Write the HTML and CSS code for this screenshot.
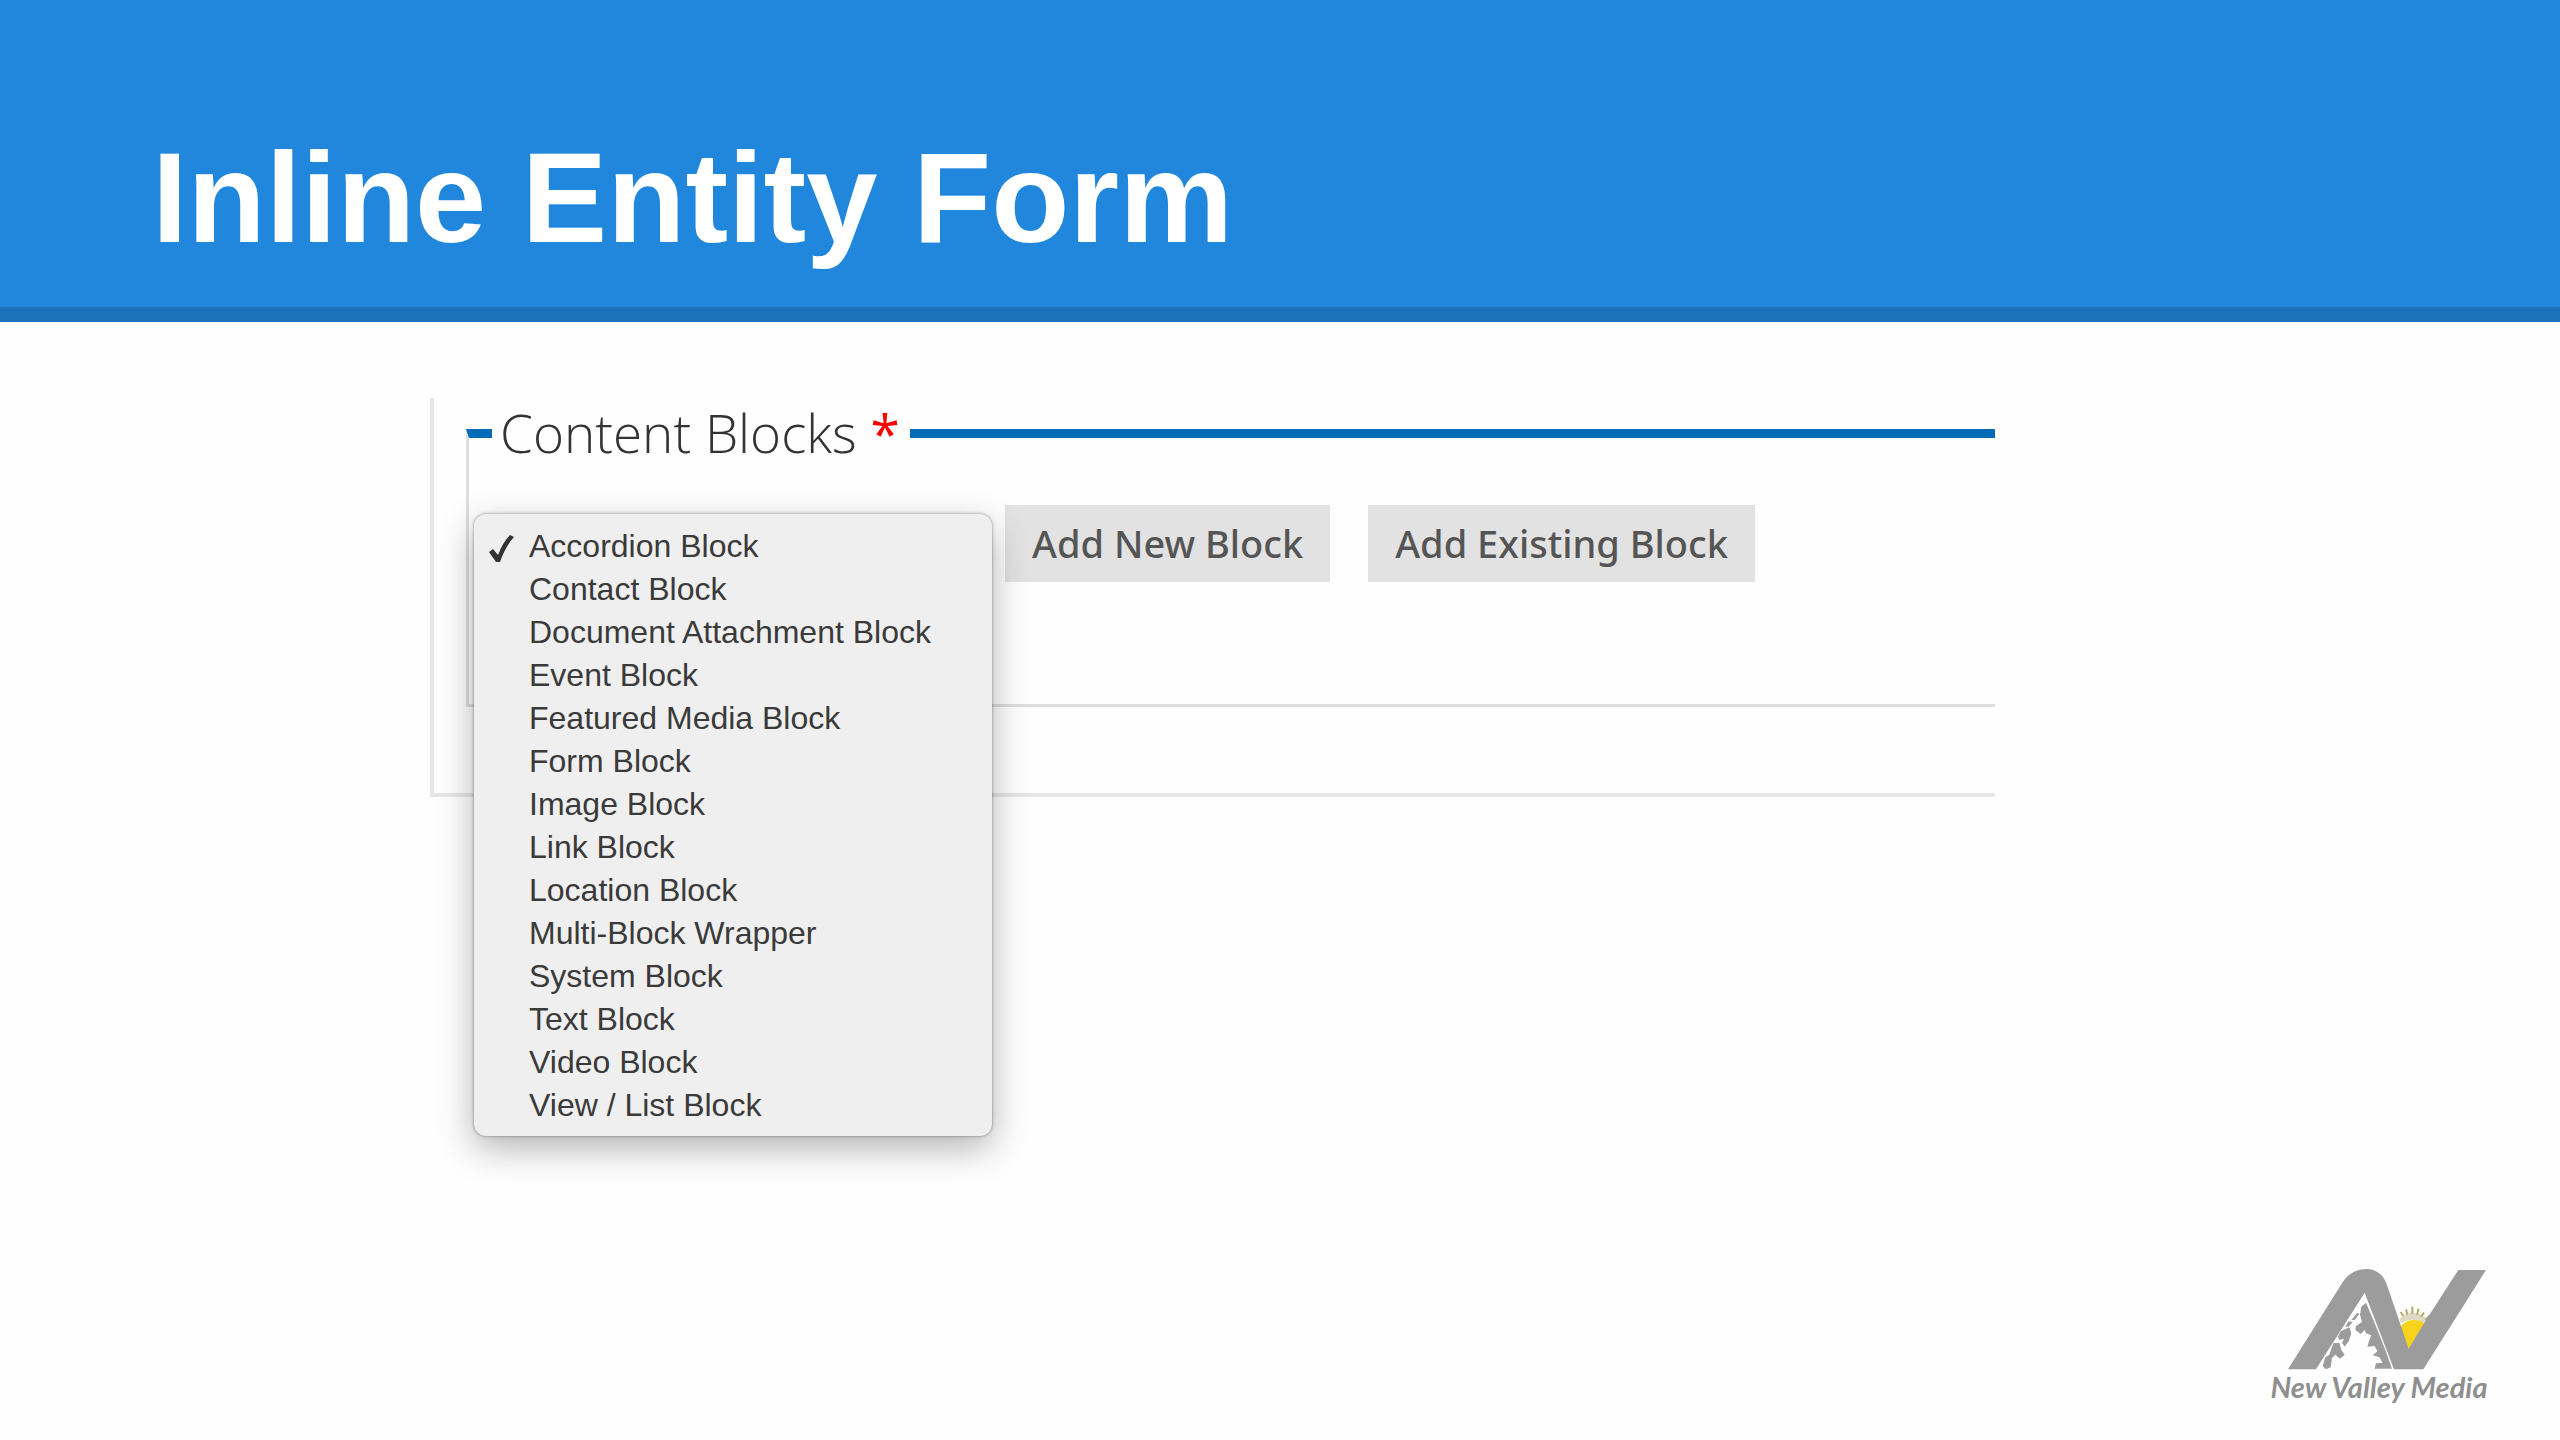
FILE: index.html
```html
<!DOCTYPE html>
<html lang="en">

<head>
    <meta charset="UTF-8">
    <meta name="viewport" content="width=device-width, initial-scale=1.0">
    <title>Inline Entity Form</title>
    <link rel="stylesheet" href="styles.css">
</head>

<body>
    <header class="slide-header">
        <h1>Inline Entity Form</h1>
    </header>

    <main class="slide-body">
        <form class="entity-form">
            <fieldset class="content-blocks">
                <legend>Content Blocks <span class="required">*</span></legend>
                <div class="actions">
                    <div class="type-picker">
                        <div class="menu">
                            <svg class="check" viewBox="0 0 26 30" aria-hidden="true">
                                <path d="M1 18 L5 15 L10 21 Q15 8 22 1 L26 3 Q17 13 12 28 L8 28 Z" />
                            </svg>
                            <select size="14" aria-label="Block type">
                                <option selected>Accordion Block</option>
                                <option>Contact Block</option>
                                <option>Document Attachment Block</option>
                                <option>Event Block</option>
                                <option>Featured Media Block</option>
                                <option>Form Block</option>
                                <option>Image Block</option>
                                <option>Link Block</option>
                                <option>Location Block</option>
                                <option>Multi-Block Wrapper</option>
                                <option>System Block</option>
                                <option>Text Block</option>
                                <option>Video Block</option>
                                <option>View / List Block</option>
                            </select>
                        </div>
                    </div>
                    <button type="button">Add New Block</button>
                    <button type="button">Add Existing Block</button>
                </div>
            </fieldset>
        </form>
    </main>

    <footer class="slide-footer">
        <div class="logo">
            <svg viewBox="90 84 654 306" aria-hidden="true">
                <!-- sun -->
                <path class="rays" d="M478 236 Q515 200 562 236 L552 250 Q515 228 482 250 Z" />
                <path class="ray-lines" d="M490 228 L482 216 M502 224 L498 208 M517 222 L517 200 M531 224 L536 206 M543 230 L552 218 M556 240 L570 226" />
                <path class="sun" d="M480 264 Q494 240 518 240 Q542 240 554 252 L506 328 Z" />
                <!-- A and V -->
                <path class="letters" d="M144 388 L306 130 Q332 87 378 87 Q422 87 439 130 L480 250 L506 326 L552 250 L655 90 L738 90 L550 388 L462 388 L374 158 L228 388 Z" />
                <!-- tree -->
                <path class="letters" d="M364 200 L378 188 L388 212 L400 240 L418 284 L436 330 L456 386 L404 386 L408 370 L428 368 L418 352 L398 346 L412 334 L404 318 L382 320 L388 300 L394 286 L378 280 L374 270 L362 282 L346 270 L348 258 L366 246 L360 224 Z" />
                <path class="letters" d="M352 218 L358 222 L344 240 L334 240 Z M326 244 L338 246 L326 260 L316 260 Z M302 274 L328 262 L334 280 L326 304 L314 320 L306 308 L312 296 L298 300 L294 290 Z M280 310 L298 308 L304 330 L314 344 L300 356 L286 344 L276 354 L272 382 L258 388 L248 378 L256 352 L268 344 Z" />
            </svg>
            <p>New Valley Media</p>
        </div>
    </footer>
</body>

</html>
```

FILE: styles.css
```css
* {
    box-sizing: border-box;
}

body {
    display: flex;
    flex-direction: column;
    min-height: 100vh;
    margin: 0;
    background-color: #fefefe;
    font-family: "Liberation Sans", Arial, sans-serif;
}

.slide-header {
    padding: 124px 152px 35px;
    background-color: #2187dc;
    border-bottom: 15px solid #1c71b9;
}

.slide-header h1 {
    margin: 0;
    color: #fff;
    font-size: 128px;
    line-height: 148px;
}

.slide-body {
    flex: 1;
    padding: 76px 565px 0 430px;
}

.entity-form {
    padding: 0 0 86px 32px;
    border-left: 4px solid #e6e6e6;
    border-bottom: 4px solid #e6e6e6;
}

.content-blocks {
    min-width: 0;
    margin: 0;
    padding: 37px 0 122px;
    border: 3px solid #dedede;
    border-top: 9px solid #036bb8;
    border-right: 0;
}

.content-blocks legend {
    margin-left: 23px;
    padding: 0 10px 0 8px;
    color: #333;
    font-family: "Open Sans", "Noto Sans", sans-serif;
    font-size: 53px;
    font-weight: 300;
    line-height: 70px;
}

.required {
    color: #f00;
    font-weight: 400;
}

.actions {
    display: flex;
    gap: 38px;
}

.actions button {
    padding: 12px 27px;
    border: 0;
    background-color: #e2e2e2;
    color: #555;
    font-family: "Noto Sans", sans-serif;
    font-size: 38px;
    font-weight: 500;
    line-height: 53px;
}

.type-picker {
    position: relative;
    width: 498px;
}

/* open menu lies over the fieldset borders */
.menu {
    position: absolute;
    top: 9px;
    left: 5px;
    width: 518px;
    padding: 14px 0 6px;
    border-radius: 12px;
    background-color: #efefef;
    box-shadow: 0 0 3px rgba(0, 0, 0, 0.45), 0 12px 36px rgba(0, 0, 0, 0.3);
}

.menu select {
    display: block;
    width: 100%;
    border: 0;
    outline: 0;
    background: none;
    color: #3a3a3a;
    font-family: inherit;
    font-size: 32px;
    overflow: hidden;
}

.menu option {
    min-height: 43px;
    padding: 0 0 0 55px;
    line-height: 43px;
}

.menu option:checked {
    background: linear-gradient(#efefef, #efefef);
    color: #3a3a3a;
}

.check {
    position: absolute;
    top: 20px;
    left: 14px;
    width: 26px;
    height: 30px;
    fill: #333;
}

.slide-footer {
    display: flex;
    justify-content: flex-end;
    padding: 0 72px 36px;
}

.logo {
    width: 218px;
}

.logo svg {
    display: block;
    width: 100%;
}

.logo p {
    margin: 0;
    color: #8f8f8f;
    font-family: Lato, sans-serif;
    font-size: 29px;
    font-style: italic;
    font-weight: 700;
    line-height: 34px;
    text-align: center;
    white-space: nowrap;
}

.letters {
    fill: #9c9c9c;
}

.sun {
    fill: #f8d31c;
}

.rays {
    fill: #ddd9c4;
}

.ray-lines {
    fill: none;
    stroke: #b5a968;
    stroke-width: 6;
}
```
